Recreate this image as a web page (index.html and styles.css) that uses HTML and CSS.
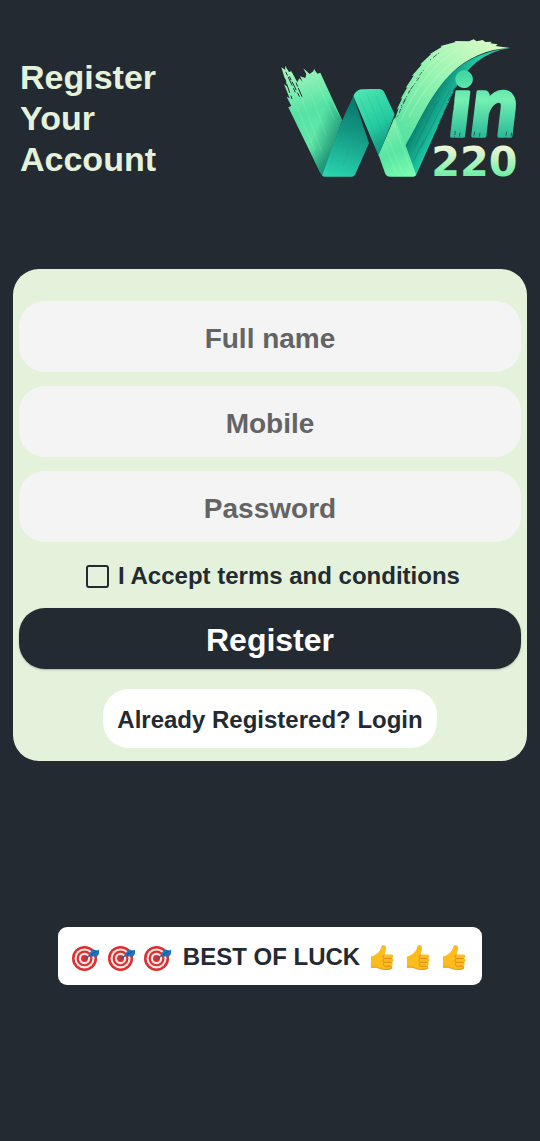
FILE: index.html
```html
<!DOCTYPE html>
<html lang="en">
<head>
    <meta charset="UTF-8" />
    <meta name="viewport" content="width=device-width, initial-scale=1.0">
    <title>Register - Win220</title>
    <link rel="stylesheet" href="styles.css">
</head>
<body>
<!-- shared emoji artwork -->
<svg class="sprite" aria-hidden="true">
    <symbol id="target" viewBox="0 0 28 28">
        <circle cx="13" cy="15" r="13" fill="#dc2f32"/>
        <circle cx="13" cy="15" r="10.4" fill="#fbe9e7"/>
        <circle cx="13" cy="15" r="8.2" fill="#dc2f32"/>
        <circle cx="13" cy="15" r="5.9" fill="#fbe9e7"/>
        <circle cx="13" cy="15" r="3.6" fill="#dc2f32"/>
        <path d="M13 15L22 10" stroke="#35618e" stroke-width="1.6"/>
        <path d="M18 10l3-4h3l1 1 3-1v4l-2 3h-5l-2-1z" fill="#1976bd"/>
        <path d="M20 11l6-4" stroke="#125087" stroke-width="1"/>
    </symbol>
    <symbol id="thumb" viewBox="0 0 26 28">
        <path d="M1 13c4-1 7-3 9-6 2-2 1-6 4-6 3 0 3 4 2 7l-1 3h7c3 0 3 3 1 4 2 1 2 3 0 4 1 1 1 3-1 4 1 2 0 3-2 3-5 1-10 0-13-2H1z" fill="#fbbc1e"/>
        <path d="M1 24h6c3 2 8 3 13 2 2 0 3-1 2-3" fill="none" stroke="#e99a16" stroke-width="1.2"/>
        <path d="M15 11c-2 1-2 3 0 4h7M15 15c-2 1-2 3 0 4h7M15 19c-2 1-1 3 0 4h6" fill="none" stroke="#dd8b12" stroke-width="1" stroke-linecap="round"/>
    </symbol>
</svg>

<header class="header">
    <h1 class="title">Register<br>Your<br>Account</h1>
    <svg class="logo" viewBox="0 0 810 480" role="img" aria-label="Win 220">
        <defs>
            <linearGradient id="left" gradientUnits="userSpaceOnUse" x1="80" y1="110" x2="190" y2="430">
                <stop offset="0" stop-color="#a6f8bd"/>
                <stop offset=".4" stop-color="#56e2a5"/>
                <stop offset=".75" stop-color="#63eaa9"/>
                <stop offset="1" stop-color="#35bd93"/>
            </linearGradient>
            <linearGradient id="leftShade" gradientUnits="userSpaceOnUse" x1="125" y1="325" x2="195" y2="355">
                <stop offset="0" stop-color="#087b68" stop-opacity="0"/>
                <stop offset="1" stop-color="#087b68" stop-opacity=".75"/>
            </linearGradient>
            <linearGradient id="fold" gradientUnits="userSpaceOnUse" x1="270" y1="210" x2="190" y2="440">
                <stop offset="0" stop-color="#087568"/>
                <stop offset=".45" stop-color="#159b87"/>
                <stop offset="1" stop-color="#29d4ad"/>
            </linearGradient>
            <linearGradient id="mid" gradientUnits="userSpaceOnUse" x1="265" y1="190" x2="370" y2="340">
                <stop offset="0" stop-color="#4ae4ae"/>
                <stop offset=".6" stop-color="#25caa1"/>
                <stop offset="1" stop-color="#0f9580"/>
            </linearGradient>
            <linearGradient id="swoosh" gradientUnits="userSpaceOnUse" x1="640" y1="30" x2="380" y2="340">
                <stop offset="0" stop-color="#d4fbc4"/>
                <stop offset=".45" stop-color="#93f4b1"/>
                <stop offset="1" stop-color="#4fdf9f"/>
            </linearGradient>
            <linearGradient id="under" gradientUnits="userSpaceOnUse" x1="440" y1="250" x2="515" y2="290">
                <stop offset="0" stop-color="#087365"/>
                <stop offset="1" stop-color="#1ecba6"/>
            </linearGradient>
            <linearGradient id="foot" gradientUnits="userSpaceOnUse" x1="350" y1="280" x2="430" y2="440">
                <stop offset="0" stop-color="#82f0ad"/>
                <stop offset=".5" stop-color="#58e5a3"/>
                <stop offset="1" stop-color="#7cffb1"/>
            </linearGradient>
            <linearGradient id="script" gradientUnits="userSpaceOnUse" x1="0" y1="130" x2="0" y2="325">
                <stop offset="0" stop-color="#42d7a2"/>
                <stop offset=".4" stop-color="#75f0b2"/>
                <stop offset="1" stop-color="#28b897"/>
            </linearGradient>
            <linearGradient id="digits" gradientUnits="userSpaceOnUse" x1="0" y1="350" x2="0" y2="438">
                <stop offset="0" stop-color="#f0f6d7"/>
                <stop offset="1" stop-color="#6df0a4"/>
            </linearGradient>
        </defs>

        <!-- left brush stroke -->
        <path d="M34 112L46 120 45 107 57 126 64 124 82 157 88 145 98 155 90 139 106 144 109 133 100 115 119 132 130 124 132 117 142 131 151 128 216 270 158 438 150 427 55 232 64 228 50 200 59 205 42 163 52 170z" fill="url(#left)"/>
        <path d="M168 190L216 270 158 438 150 427 80 285z" fill="url(#leftShade)"/>
        <path d="M47 125L76 187M58 139L91 205M78 158L96 200M44 145L66 207" fill="none" stroke="#232a32" stroke-width="3" stroke-dasharray="13 5 28 9"/>
        <path d="M95 205L155 365M122 190L170 318M80 231L134 359M145 163L194 270" fill="none" stroke="#b5ffc9" stroke-width="3" opacity=".2"/>

        <!-- swoosh with its darker underside -->
        <path d="M404 347C455 225 535 72 720 54 640 67 592 108 548 190L437 438z" fill="url(#under)"/>
        <path d="M326 376L376 263 386 234 380 239 397 204 392 206 412 172 407 173 431 137 426 137 455 104 451 103 483 73 480 72 515 51 512 48 557 36 553 33 597 34 611 28 620 34 638 30 646 36 665 35 661 40 683 43 677 48 720 54C651 56 591 85 547 127 478 195 452 270 404 350z" fill="url(#swoosh)"/>
        <path d="M394 272C430 180 491 102 560 60M418 260C455 184 518 110 590 66M400 207C435 145 485 90 535 63" fill="none" stroke="#e3ffd1" stroke-width="4" opacity=".25"/>
        <path d="M382 260L408 204M394 228L424 174M415 187L448 142M440 146L467 113M480 90L508 68M504 287L532 224M530 223L557 167" fill="none" stroke="#232a32" stroke-width="2" stroke-dasharray="4 8 14 4"/>
        <path d="M435 350L501 213M453 354L541 179M432 391L463 326" fill="none" stroke="#075e55" stroke-width="3" opacity=".3"/>

        <!-- folded ribbons -->
        <path d="M250 198L297 340 255 434Q252 440 245 440H164Q155 440 158 432L216 272z" fill="url(#fold)"/>
        <path d="M250 198Q257 181 273 178 283 176 329 177 338 177 342 185L374 253 326 378z" fill="url(#mid)"/>
        <path d="M373 263L405 341 437 430Q440 440 430 440H359Q350 440 346 432L326 376z" fill="url(#foot)"/>
        <path d="M270 205L320 325M290 190L340 312M315 190L354 286M230 273L180 406M266 282L218 410" fill="none" stroke="#08937c" stroke-width="3" opacity=".15"/>
        <path d="M373 283L420 412M355 326L397 429M345 345L381 432" fill="none" stroke="#baffc3" stroke-width="3" opacity=".25"/>

        <text class="logo-script" x="540" y="318" fill="url(#script)" stroke="url(#script)">in</text>
        <path d="M556 303L552 328M570 308L567 328M614 305L610 328M630 308L627 328M710 305L706 328M725 308L721 328M552 215L548 245" fill="none" stroke="#232a32" stroke-width="2" stroke-dasharray="12 5"/>
        <text class="logo-digits" x="484" y="438" fill="url(#digits)">220</text>
    </svg>
</header>

<main>
    <form class="card">
        <input class="field" type="text" name="name" placeholder="Full name" aria-label="Full name">
        <input class="field" type="tel" name="mobile" placeholder="Mobile" aria-label="Mobile">
        <input class="field" type="password" name="password" placeholder="Password" aria-label="Password">
        <label class="terms">
            <input class="checkbox" type="checkbox" name="terms">
            <span>I Accept terms and conditions</span>
        </label>
        <button class="register" type="submit">Register</button>
        <a class="login" href="#login">Already Registered? Login</a>
    </form>

    <div class="luck">
        <svg class="emoji" role="img" aria-label="target"><use href="#target"/></svg>
        <svg class="emoji" aria-hidden="true"><use href="#target"/></svg>
        <svg class="emoji" aria-hidden="true"><use href="#target"/></svg>
        <span class="luck-text">BEST OF LUCK</span>
        <svg class="emoji" role="img" aria-label="thumbs up"><use href="#thumb"/></svg>
        <svg class="emoji" aria-hidden="true"><use href="#thumb"/></svg>
        <svg class="emoji" aria-hidden="true"><use href="#thumb"/></svg>
    </div>
</main>
</body>
</html>
```
FILE: styles.css
```css
* {
    box-sizing: border-box;
    margin: 0;
    padding: 0;
}
body {
    background: #232a32;
    color: #232a32;
    font-family: "Liberation Sans", Arial, sans-serif;
    font-size: 24px;
    font-weight: bold;
}
.sprite {
    display: block;
    width: 0;
    height: 0;
}

.header {
    display: flex;
    justify-content: space-between;
    align-items: flex-start;
    padding: 30px 0 0 20px;
}
.title {
    padding-top: 27px;
    color: #e5f2db;
    font-size: 34px;
    line-height: 41px;
}
.logo {
    width: 270px;
    min-width: 0;
}
.logo-script {
    font-family: Lato, sans-serif;
    font-size: 256px;
    font-style: italic;
    font-weight: 900;
    stroke-width: 10px;
    stroke-linejoin: round;
}
.logo-digits {
    font-family: "DejaVu Sans", sans-serif;
    font-size: 124px;
    font-weight: bold;
}

.card {
    display: flex;
    flex-direction: column;
    margin: 79px 13px 0;
    padding: 32px 6px 13px;
    border-radius: 26px;
    background: #e5f2db;
}
.field {
    width: 100%;
    height: 71px;
    margin-bottom: 14px;
    padding-top: 4px;
    border: 0;
    border-radius: 26px;
    background: #f4f4f4;
    color: #232a32;
    font: inherit;
    font-size: 28px;
    text-align: center;
}
.field::placeholder {
    color: #646464;
    opacity: 1;
}
.terms {
    display: flex;
    justify-content: center;
    align-items: center;
    gap: 9px;
    height: 40px;
    margin-bottom: 12px;
    padding-left: 6px;
}
.checkbox {
    appearance: none;
    width: 23px;
    height: 23px;
    border: 2px solid #232a32;
    border-radius: 3px;
}
.checkbox:checked {
    background: #232a32;
}
.register {
    height: 61px;
    padding-top: 3px;
    border: 0;
    border-radius: 26px;
    background: #232a32;
    box-shadow: 0 1px 2px rgba(0, 0, 0, .25);
    color: #fff;
    font: inherit;
    font-size: 32px;
}
.login {
    align-self: center;
    margin-top: 20px;
    padding: 2px 14px 0;
    border-radius: 26px;
    background: #fff;
    color: #232a32;
    line-height: 57px;
    text-decoration: none;
}

.luck {
    display: flex;
    justify-content: center;
    align-items: center;
    gap: 9px;
    width: fit-content;
    height: 58px;
    margin: 166px auto 40px;
    padding: 2px 14px 0;
    border-radius: 9px;
    background: #fff;
    white-space: nowrap;
}
.luck-text {
    padding-left: 3px;
}
.emoji {
    width: 27px;
    height: 27px;
}
```
